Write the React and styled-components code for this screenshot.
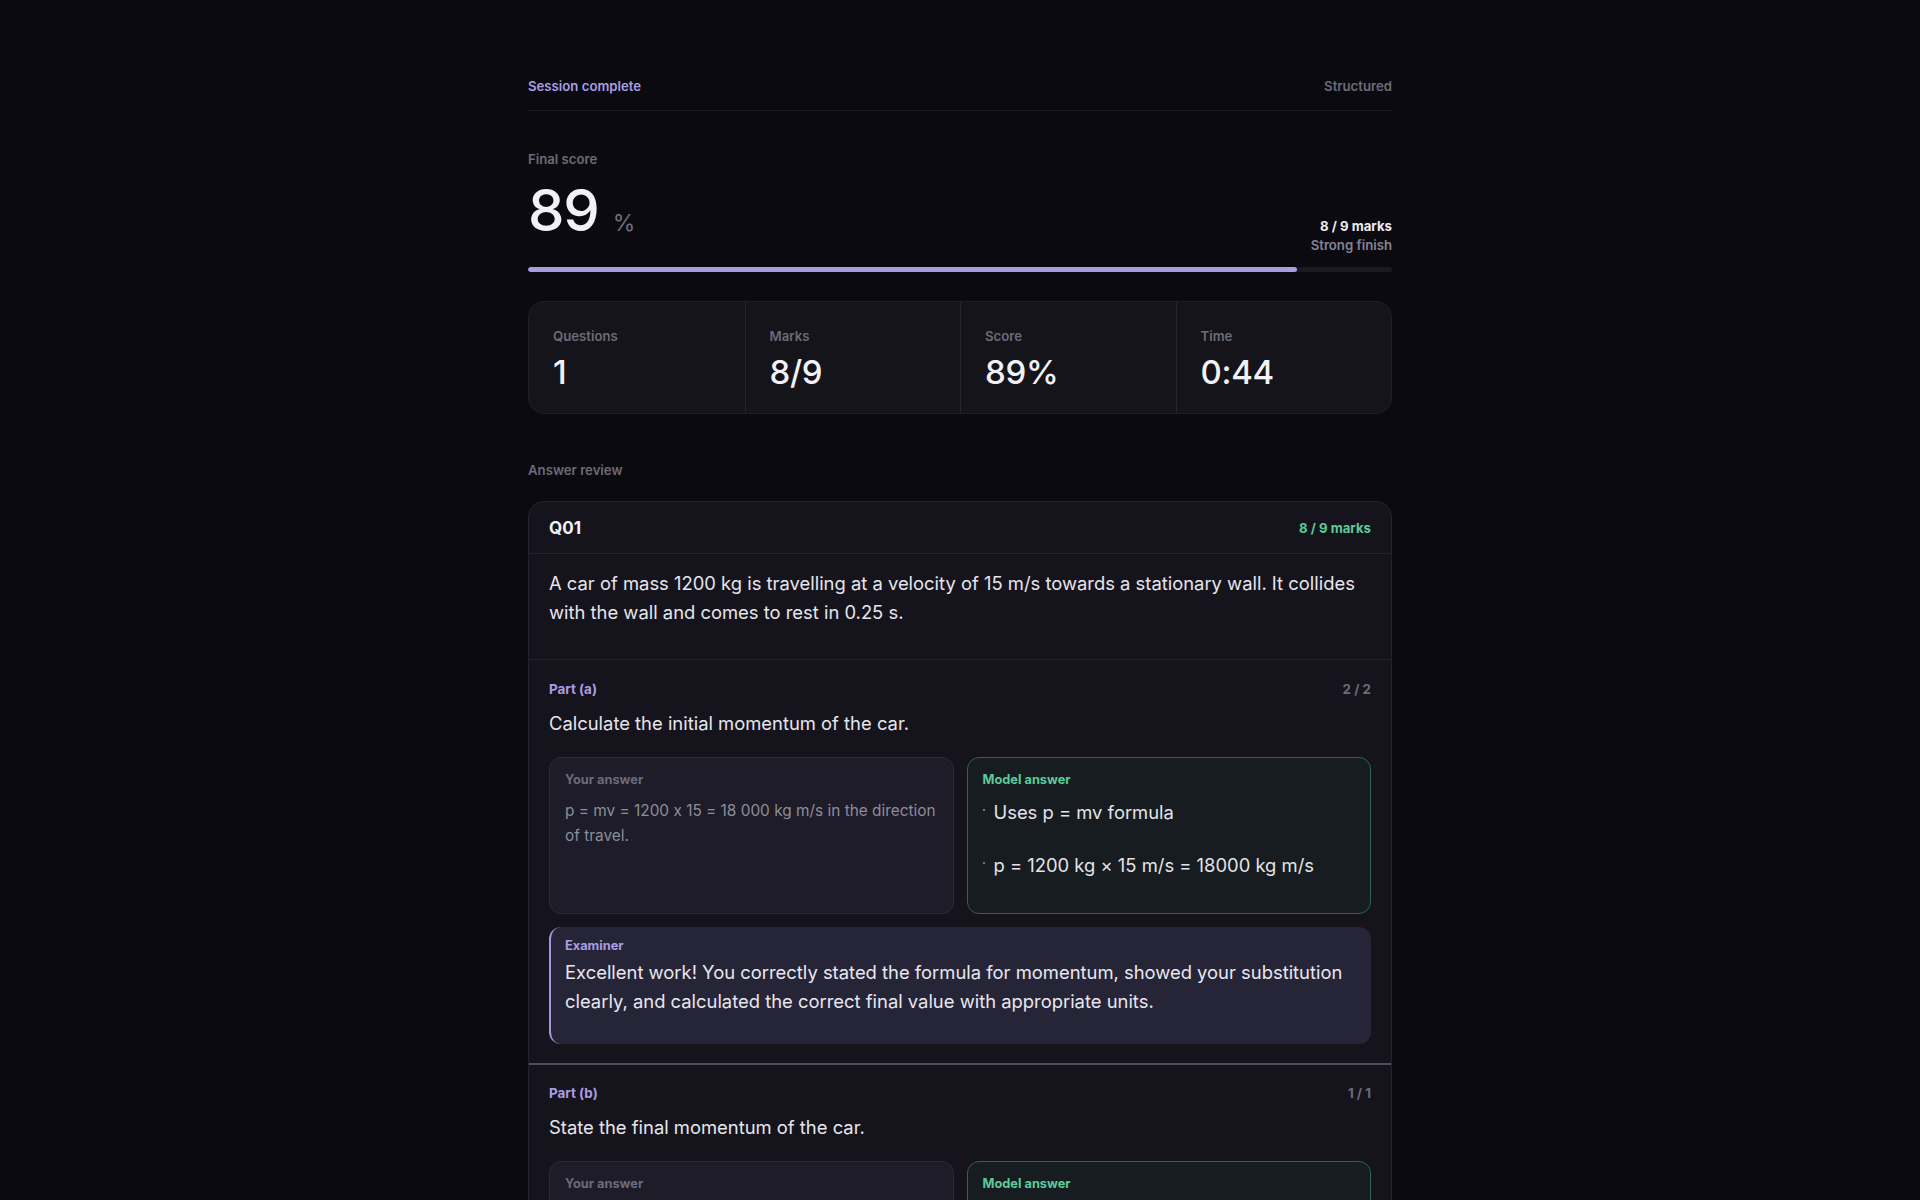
import React from "react";
import styled, { createGlobalStyle } from "styled-components";

const GlobalStyle = createGlobalStyle`
  html, body { margin: 0; padding: 0; background: #0b0a11; }
  body { font-family: Inter, "Noto Sans", "Liberation Sans", sans-serif; color: #ecebf2; -webkit-font-smoothing: antialiased; font-feature-settings: "calt" 0; }
  * { box-sizing: border-box; }
`;

const Page = styled.main`
  max-width: 864px;
  margin: 0 auto;
  padding: 76px 0 80px;
`;

const TopBar = styled.header`
  display: flex;
  justify-content: space-between;
  align-items: center;
  padding-bottom: 14px;
  border-bottom: 1px solid #1c1b24;
`;

const TopLabel = styled.span`
  font-size: 13.2px;
  line-height: 20px;
  font-weight: 600;
  color: ${(p) => (p.$accent ? "#a99de4" : "#6c6b78")};
`;

const SmallLabel = styled.div`
  font-size: 13.2px;
  line-height: 20px;
  font-weight: 600;
  color: #6c6b78;
`;

const ScoreBlock = styled.section`
  margin-top: 38px;
`;

const ScoreRow = styled.div`
  margin-top: 12px;
  display: flex;
  justify-content: space-between;
  align-items: baseline;
`;

const BigScore = styled.div`
  display: flex;
  align-items: baseline;
  gap: 14px;
`;

const BigNumber = styled.span`
  font-size: 58px;
  line-height: 1;
  font-weight: 500;
  letter-spacing: -0.02em;
  color: #f2f1f7;
`;

const Percent = styled.span`
  font-size: 23px;
  font-weight: 400;
  color: #6f6e7b;
`;

const ScoreMeta = styled.div`
  display: flex;
  flex-direction: column;
  align-items: flex-end;
  font-size: 13.2px;
  line-height: 19px;
  font-weight: 600;
`;

const MetaStrong = styled.span`
  color: #ecebf2;
  font-weight: 700;
`;

const MetaMuted = styled.span`
  color: #85848f;
`;

const Track = styled.div`
  margin-top: 12px;
  height: 5px;
  border-radius: 999px;
  background: #1b1a23;
  overflow: hidden;
`;

const Fill = styled.div`
  height: 100%;
  border-radius: 999px;
  background: #a99ce2;
`;

const StatsCard = styled.section`
  margin-top: 29px;
  display: grid;
  grid-template-columns: repeat(4, 1fr);
  background: #15141b;
  border: 1px solid #1f1e28;
  border-radius: 16px;
  overflow: hidden;
`;

const StatCell = styled.div`
  padding: 24px 24px 21px;
  & + & { border-left: 1px solid #25242e; }
`;

const StatValue = styled.div`
  margin-top: 6px;
  font-size: 33px;
  line-height: 40px;
  font-weight: 500;
  letter-spacing: -0.01em;
  color: #f2f1f7;
`;

const ReviewLabel = styled(SmallLabel)`
  margin-top: 46px;
`;

const QuestionCard = styled.article`
  margin-top: 21px;
  background: #15141c;
  border: 1px solid #25242e;
  border-radius: 16px;
  overflow: hidden;
`;

const QuestionHeader = styled.div`
  display: flex;
  justify-content: space-between;
  align-items: center;
  padding: 16px 20px 15px;
  border-bottom: 1px solid #25242e;
`;

const QTitle = styled.span`
  font-size: 17px;
  line-height: 20px;
  font-weight: 700;
  color: #f2f1f7;
`;

const QMarks = styled.span`
  font-size: 13.2px;
  line-height: 20px;
  font-weight: 700;
  color: #5ccb98;
`;

const Stem = styled.p`
  margin: 0;
  padding: 15px 20px 32px;
  font-size: 18.4px;
  line-height: 29px;
  color: #e6e5ec;
  border-bottom: 1px solid #25242e;
`;

const PartSection = styled.section`
  padding: 19px 20px 19px;
  & + & { border-top: 2px solid #4f4e59; padding-top: 18px; }
`;

const PartHead = styled.div`
  display: flex;
  justify-content: space-between;
  align-items: center;
`;

const PartLabel = styled.span`
  font-size: 13.4px;
  line-height: 20px;
  font-weight: 700;
  color: ${(p) => (p.$muted ? "#6c6b78" : "#a99de4")};
`;

const PartPrompt = styled.p`
  margin: 10px 0 0;
  font-size: 18.4px;
  line-height: 28px;
  color: #e6e5ec;
`;

const AnswerGrid = styled.div`
  margin-top: 20px;
  display: grid;
  grid-template-columns: 1fr 1fr;
  gap: 13px;
`;

const AnswerBox = styled.div`
  border-radius: 12px;
  padding: 12px 15px 18px;
  border: 1px solid ${(p) => (p.$model ? "#2b6553" : "#2b2a37")};
  background: ${(p) => (p.$model ? "#161c1f" : "#1d1c28")};
`;

const BoxLabel = styled.div`
  font-size: 12.8px;
  line-height: 20px;
  font-weight: 700;
  color: ${(p) => (p.$tone === "green" ? "#5ccb98" : p.$tone === "purple" ? "#a99de4" : "#6c6b78")};
`;

const AnswerText = styled.p`
  margin: 8px 0 0;
  font-size: 15.4px;
  line-height: 25px;
  color: #8e8d9a;
`;

const ModelList = styled.ul`
  list-style: none;
  margin: 9px 0 16px;
  padding: 0;
`;

const ModelItem = styled.li`
  position: relative;
  padding-left: 11px;
  font-size: 18.4px;
  line-height: 27px;
  color: #e4e3ea;
  & + & { margin-top: 26px; }
  &::before {
    content: "";
    position: absolute;
    left: 0;
    top: 10px;
    width: 2px;
    height: 2px;
    border-radius: 50%;
    background: #8e8d9a;
  }
`;

const Examiner = styled.div`
  margin-top: 13px;
  border-radius: 12px;
  border-left: 2px solid #a194e3;
  background: #262437;
  padding: 9px 16px 12px 14px;
`;

const ExaminerText = styled.p`
  margin: 2px 0 16px;
  font-size: 18.4px;
  line-height: 29px;
  color: #e8e7ee;
`;

const stats = [
  { label: "Questions", value: "1" },
  { label: "Marks", value: "8/9" },
  { label: "Score", value: "89%" },
  { label: "Time", value: "0:44" },
];

const parts = [
  {
    label: "Part (a)",
    score: "2 / 2",
    prompt: "Calculate the initial momentum of the car.",
    answer: "p = mv = 1200 x 15 = 18 000 kg m/s in the direction of travel.",
    model: ["Uses p = mv formula", "p = 1200 kg × 15 m/s = 18000 kg m/s"],
    feedback:
      "Excellent work! You correctly stated the formula for momentum, showed your substitution clearly, and calculated the correct final value with appropriate units.",
  },
  {
    label: "Part (b)",
    score: "1 / 1",
    prompt: "State the final momentum of the car.",
    answer: "The final momentum is 0 kg m/s because the car comes to rest.",
    model: ["Final momentum = 0 kg m/s"],
    feedback: "Correct. The car is at rest, so its final momentum is zero.",
  },
];

export default function App() {
  const pct = 89;
  return (
    <>
      <GlobalStyle />
      <Page>
        <TopBar>
          <TopLabel $accent>Session complete</TopLabel>
          <TopLabel>Structured</TopLabel>
        </TopBar>

        <ScoreBlock>
          <SmallLabel>Final score</SmallLabel>
          <ScoreRow>
            <BigScore>
              <BigNumber>89</BigNumber>
              <Percent>%</Percent>
            </BigScore>
            <ScoreMeta>
              <MetaStrong>8 / 9 marks</MetaStrong>
              <MetaMuted>Strong finish</MetaMuted>
            </ScoreMeta>
          </ScoreRow>
          <Track>
            <Fill style={{ width: `${pct}%` }} />
          </Track>
        </ScoreBlock>

        <StatsCard>
          {stats.map((s) => (
            <StatCell key={s.label}>
              <SmallLabel>{s.label}</SmallLabel>
              <StatValue>{s.value}</StatValue>
            </StatCell>
          ))}
        </StatsCard>

        <ReviewLabel>Answer review</ReviewLabel>

        <QuestionCard>
          <QuestionHeader>
            <QTitle>Q01</QTitle>
            <QMarks>8 / 9 marks</QMarks>
          </QuestionHeader>
          <Stem>
            A car of mass 1200 kg is travelling at a velocity of 15 m/s towards a stationary wall. It collides with the
            wall and comes to rest in 0.25 s.
          </Stem>
          {parts.map((p) => (
            <PartSection key={p.label}>
              <PartHead>
                <PartLabel>{p.label}</PartLabel>
                <PartLabel $muted>{p.score}</PartLabel>
              </PartHead>
              <PartPrompt>{p.prompt}</PartPrompt>
              <AnswerGrid>
                <AnswerBox>
                  <BoxLabel>Your answer</BoxLabel>
                  <AnswerText>{p.answer}</AnswerText>
                </AnswerBox>
                <AnswerBox $model>
                  <BoxLabel $tone="green">Model answer</BoxLabel>
                  <ModelList>
                    {p.model.map((m) => (
                      <ModelItem key={m}>{m}</ModelItem>
                    ))}
                  </ModelList>
                </AnswerBox>
              </AnswerGrid>
              <Examiner>
                <BoxLabel $tone="purple">Examiner</BoxLabel>
                <ExaminerText>{p.feedback}</ExaminerText>
              </Examiner>
            </PartSection>
          ))}
        </QuestionCard>
      </Page>
    </>
  );
}
